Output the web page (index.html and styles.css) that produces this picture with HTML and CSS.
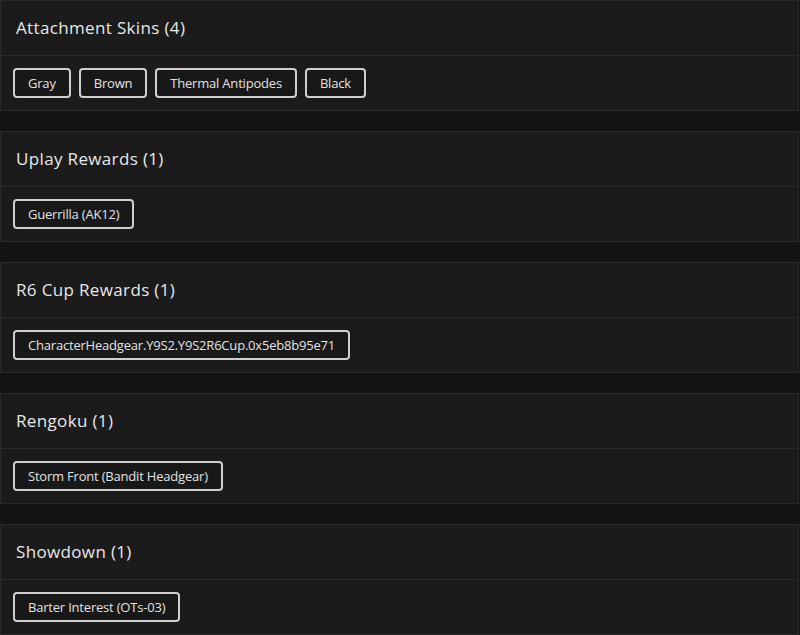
FILE: index.html
```html
<!DOCTYPE html>
<html>
<head>
<meta charset="utf-8">
<link rel="stylesheet" href="styles.css">
</head>
<body>
<div class="list">
  <section class="card">
    <div class="card-head">Attachment Skins (4)</div>
    <div class="card-body">
      <span class="tag">Gray</span>
      <span class="tag">Brown</span>
      <span class="tag">Thermal Antipodes</span>
      <span class="tag">Black</span>
    </div>
  </section>
  <section class="card">
    <div class="card-head">Uplay Rewards (1)</div>
    <div class="card-body">
      <span class="tag">Guerrilla (AK12)</span>
    </div>
  </section>
  <section class="card">
    <div class="card-head">R6 Cup Rewards (1)</div>
    <div class="card-body">
      <span class="tag">CharacterHeadgear.Y9S2.Y9S2R6Cup.0x5eb8b95e71</span>
    </div>
  </section>
  <section class="card">
    <div class="card-head">Rengoku (1)</div>
    <div class="card-body">
      <span class="tag">Storm Front (Bandit Headgear)</span>
    </div>
  </section>
  <section class="card">
    <div class="card-head">Showdown (1)</div>
    <div class="card-body">
      <span class="tag">Barter Interest (OTs-03)</span>
    </div>
  </section>
</div>
</body>
</html>
```
FILE: styles.css
```css
html, body {
  margin: 0;
  padding: 0;
  background: #131313;
}
body {
  font-family: "Open Sans", "Noto Sans", sans-serif;
  color: #e6e6e6;
}
.list {
  display: flex;
  flex-direction: column;
  gap: 20px;
  width: 799px;
}
.card {
  background: #1b1b1b;
  border: 1px solid #2a2a2a;
}
.card-head {
  height: 55px;
  box-sizing: border-box;
  padding: 0 15px 2px;
  display: flex;
  align-items: center;
  font-size: 17px;
  font-weight: 500;
  letter-spacing: 0.35px;
  color: #e8e8e8;
  border-bottom: 1px solid #2c2c2c;
}
.card-body {
  height: 54px;
  box-sizing: border-box;
  padding: 0 12px;
  display: flex;
  align-items: center;
  gap: 8px;
}
.tag {
  display: inline-flex;
  align-items: center;
  height: 30px;
  box-sizing: border-box;
  padding: 0 13px;
  border: 2px solid #cfcfcf;
  border-radius: 4px;
  background: #181818;
  font-size: 13px;
  letter-spacing: -0.2px;
  color: #e2e2e2;
}
```
